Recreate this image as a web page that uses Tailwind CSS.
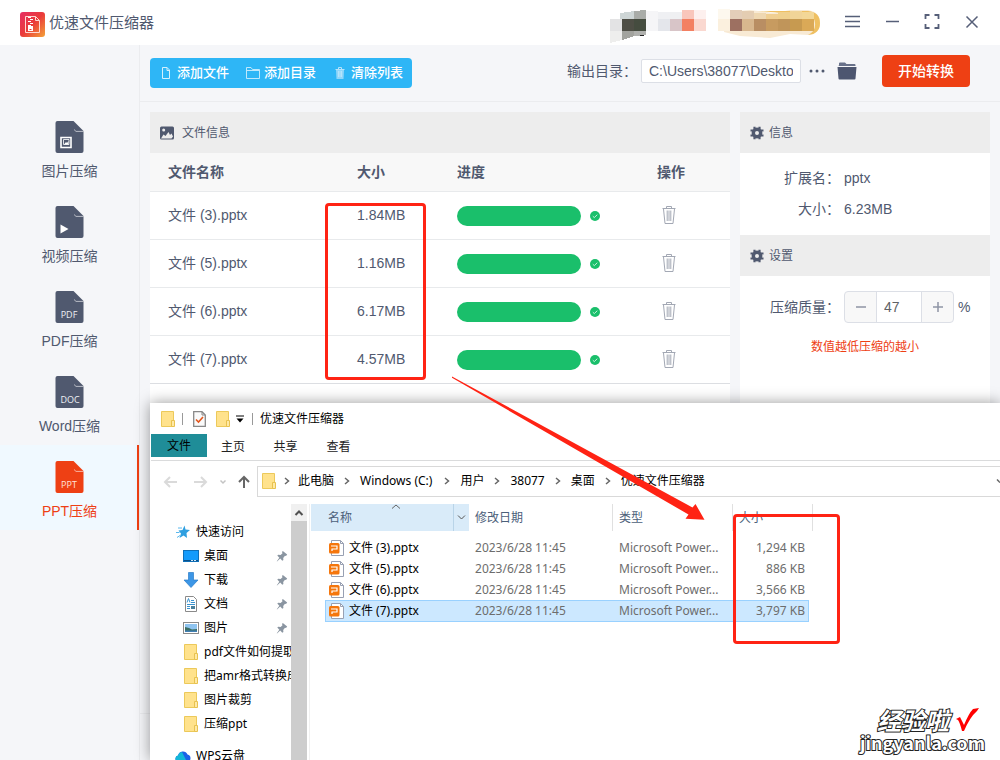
<!DOCTYPE html>
<html lang="zh-CN">
<head>
<meta charset="utf-8">
<meta name="viewport" content="width=device-width, initial-scale=1">
<title>优速文件压缩器</title>
<script src="https://cdn.jsdelivr.net/npm/@tailwindcss/browser@4"></script>
</head>
<body class="relative flex h-screen flex-col overflow-hidden bg-[#f5f6f9] font-['Liberation_Sans','Noto_Sans_CJK_SC',sans-serif] text-sm text-[#50596f]">

<svg class="hidden" aria-hidden="true">
  <symbol id="trash" viewBox="0 0 14 20"><path d="M.5 3.500H13.500M4.500 3V1.500H9.500V3M1.500 4L3 18.500H11L12.500 4M5.200 5.500V16M7 5.500V16M8.800 5.500V16" fill="none" stroke="currentColor" stroke-linejoin="round"/></symbol>
  <symbol id="ok" viewBox="0 0 10 10"><circle cx="5" cy="5" r="5" fill="#1abf6b"/><path d="M2.800 5.200L4.300 6.600L7.300 3.700" fill="none" stroke="#d6f5e5" stroke-width=".9"/></symbol>
  <symbol id="gear" viewBox="0 0 14 14"><circle cx="7" cy="7" r="3.700" fill="none" stroke="currentColor" stroke-width="3.400"/><path d="M4.500.8V3.500M9.500.8V3.500M4.500 10.500V13.200M9.500 10.500V13.200M.5 4.500H3M.5 9.500H3M11 4.500H13.500M11 9.500H13.500" stroke="currentColor" stroke-width="2.200"/></symbol>
  <symbol id="folder" viewBox="0 0 14 16"><path d="M.5.500H12.500V15.500H.5Z" fill="#ffe28c" stroke="#ecc95a"/><path d="M10.500 9.500H13.500V15.500H10.500Z" fill="#ffe9a6" stroke="#e8c24f"/></symbol>
  <symbol id="pin" viewBox="0 0 12 12"><path d="M6.800 1 11.200 4.600 10 6 9 5.800 7.200 8 7.400 10 6.300 10.800 4.200 8.600 1 11.500.8 11.200 3.300 7.800 1.300 5.600 2.200 4.700 4.600 4.900 6.500 3.200 6 1.900Z" fill="#8a95a1"/></symbol>
  <symbol id="chev" viewBox="0 0 6 8"><path d="M1 1 4.500 4 1 7" fill="none" stroke="#666" stroke-width="1.500"/></symbol>
  <symbol id="ppt" viewBox="0 0 16 16"><path d="M2.500.5H11.500L14.500 3.500V15.500H2.500Z" fill="#fff" stroke="#98a0b3"/><path d="M11.500.5V3.500H14.500" fill="none" stroke="#98a0b3"/><rect y="3" width="10.500" height="10.500" rx="1.500" fill="#f5760c"/><path d="M2 6H8V9H3V11" fill="none" stroke="#fff" stroke-width="1.200"/></symbol>
  <symbol id="doc" viewBox="0 0 30 32"><path d="M2.500 0H18.500L28.500 10V30Q28.500 32 26.500 32H2.500Q.5 32 .5 30V2Q.5 0 2.500 0Z" fill="currentColor"/><path d="M19 8.500 21 10.400H28.500" fill="none" stroke="#fff" stroke-opacity=".6"/></symbol>
</svg>

<header class="flex h-[45px] shrink-0 items-center bg-white pr-2 pl-5">
  <svg class="mt-1 size-[25px]" viewBox="0 0 25 25" aria-hidden="true">
    <defs><linearGradient id="lg" x1="0" y1="0" x2="1" y2="1"><stop offset="0" stop-color="#e62d63"/><stop offset=".5" stop-color="#ea3b3a"/><stop offset="1" stop-color="#f4a338"/></linearGradient></defs>
    <rect width="25" height="25" rx="3" fill="url(#lg)"/>
    <path d="M5.500 4.500H15.500L19.500 8.500V20.500H5.500ZM15.500 4.500V8.500H19.500" fill="none" stroke="#ffd9d4"/>
    <path d="M8 5.500H11M10 7.500H13M8 9.500H11M10 11.500H13M8 13.500H11" stroke="#fff"/><rect x="8" y="14" width="5" height="5" fill="#fff"/><path d="M9.500 17.500H11.500" stroke="#e33"/>
  </svg>
  <h1 class="ml-1 text-[15px]">优速文件压缩器</h1>
  <svg class="mr-2.5 ml-auto h-[45px] w-[212px]" viewBox="610 0 212 45" aria-hidden="true">
    <g shape-rendering="crispEdges">
      <path d="M620 13 634 11V19H620Z" fill="#ced6d6"/><path d="M634 11 646 10V19H634Z" fill="#a9aca8"/>
      <rect x="610" y="19" width="12" height="12" fill="#e3e3e4"/><rect x="622" y="19" width="12" height="12" fill="#4e4e45"/><rect x="634" y="19" width="12" height="12" fill="#454c3f"/>
      <path d="M610 31H622V40L610 43Z" fill="#eeeeed"/><path d="M622 31H634V36L622 40Z" fill="#a2a39e"/><path d="M634 31H646V35L634 36Z" fill="#b0b1ae"/><path d="M640 35H644V36H640Z" fill="#222"/>
      <rect x="646" y="11" width="12" height="20" fill="#f5f5f7"/><rect x="658" y="12" width="12" height="7" fill="#eff0f3"/><rect x="658" y="19" width="12" height="12" fill="#e4e6eb"/>
      <rect x="670" y="12" width="12" height="7" fill="#eff0f2"/><rect x="670" y="19" width="12" height="12" fill="#d8c5c8"/>
      <rect x="682" y="10" width="12" height="9" fill="#f9c6bb"/><rect x="682" y="19" width="12" height="12" fill="#f38062"/>
      <rect x="694" y="10" width="12" height="9" fill="#fdf0ee"/><rect x="694" y="19" width="12" height="12" fill="#fad8d0"/>
    </g>
    <path d="M726 12 750 10 775 13 790 10H808Q820 12 820 23T808 35L790 34 770 38 740 36 724 32Z" fill="#f8ead4"/>
    <path d="M758 11H808Q820 12 820 23T808 35Q816 31 815 23T806 15Z" fill="#efc062"/>
    <g shape-rendering="crispEdges">
      <rect x="718" y="9" width="12" height="10" fill="#fdf8ee"/><rect x="718" y="19" width="12" height="12" fill="#fbf0de"/>
      <rect x="730" y="10" width="12" height="9" fill="#e3ceb9"/><rect x="730" y="19" width="12" height="12" fill="#9d7061"/>
      <rect x="742" y="11" width="12" height="8" fill="#e4cdb2"/><rect x="742" y="19" width="12" height="12" fill="#d8b78e"/>
      <rect x="754" y="13" width="12" height="6" fill="#efd8b2"/><rect x="754" y="19" width="12" height="12" fill="#b98e63"/>
      <rect x="766" y="14" width="12" height="5" fill="#f0cf92"/><rect x="766" y="19" width="12" height="12" fill="#c79b60"/>
      <rect x="778" y="12" width="12" height="7" fill="#f0d08d"/><rect x="778" y="19" width="12" height="12" fill="#c0955a"/>
      <rect x="790" y="11" width="12" height="8" fill="#f1d498"/><rect x="790" y="19" width="12" height="12" fill="#c79a50"/>
      <rect x="802" y="12" width="12" height="7" fill="#f3d797"/><rect x="802" y="19" width="12" height="12" fill="#daa957"/>
    </g>
  </svg>
  <div class="flex pb-1 text-[#565f78]">
    <button class="flex h-8 w-10 items-center justify-center" aria-label="菜单"><svg class="size-4" viewBox="0 0 16 16"><path d="M1 3.500H16M1 8.500H16M1 13.500H16" stroke="currentColor" stroke-width="1.500"/></svg></button>
    <button class="flex h-8 w-10 items-center justify-center" aria-label="最小化"><svg class="size-4" viewBox="0 0 16 16"><path d="M2 8.500H15" stroke="currentColor" stroke-width="1.500"/></svg></button>
    <button class="flex h-8 w-10 items-center justify-center" aria-label="最大化"><svg class="size-4" viewBox="0 0 16 16"><path d="M1.500 6V2H5.500M10.500 2H14.500V6M14.500 11V15H10.500M5.500 15H1.500V11" fill="none" stroke="currentColor" stroke-width="1.800"/></svg></button>
    <button class="flex h-8 w-10 items-center justify-center" aria-label="关闭"><svg class="size-4" viewBox="0 0 16 16"><path d="M2.500 3.500 13.500 14.500M13.500 3.500 2.500 14.500" stroke="currentColor" stroke-width="1.500"/></svg></button>
  </div>
</header>

<div class="flex min-h-0 flex-1">
  <nav class="w-[140px] shrink-0 border-r border-[#ebecef] pt-[60px]">
    <a href="#" class="flex h-[85px] flex-col items-center gap-2 pt-4">
      <svg class="h-8 w-[30px]" viewBox="0 0 30 32"><use href="#doc"/><path d="M6 16.500H16V26.500H6Z" fill="none" stroke="#fff" stroke-width="1.600"/><path d="M8.500 18.500H14V23.500H8.500Z" fill="none" stroke="#fff" stroke-width=".8"/><path d="M9 23.500 11 21 12 22 13.500 20V23.500Z" fill="#fff"/></svg>
      <span>图片压缩</span></a>
    <a href="#" class="flex h-[85px] flex-col items-center gap-2 pt-4">
      <svg class="h-8 w-[30px]" viewBox="0 0 30 32"><use href="#doc"/><path d="M5.500 18.500 13.500 23 5.500 27.500Z" fill="#fff"/></svg>
      <span>视频压缩</span></a>
    <a href="#" class="flex h-[85px] flex-col items-center gap-2 pt-4">
      <svg class="h-8 w-[30px]" viewBox="0 0 30 32"><use href="#doc"/><text x="14" y="27" font-size="9" text-anchor="middle" fill="#eef0f4" class="font-['Open_Sans']">PDF</text></svg>
      <span>PDF压缩</span></a>
    <a href="#" class="flex h-[85px] flex-col items-center gap-2 pt-4">
      <svg class="h-8 w-[30px]" viewBox="0 0 30 32"><use href="#doc"/><text x="15" y="27" font-size="9" text-anchor="middle" fill="#eef0f4" class="font-['Open_Sans']">DOC</text></svg>
      <span>Word压缩</span></a>
    <a href="#" aria-current="page" class="flex h-[85px] flex-col items-center gap-2 bg-[#f0f9ff] pt-4 text-[#ee4014] shadow-[inset_-2px_0_0_#ee4014]">
      <svg class="h-8 w-[30px]" viewBox="0 0 30 32"><use href="#doc"/><text x="14" y="27" font-size="9" text-anchor="middle" fill="#ffe3da" class="font-['Open_Sans']">PPT</text></svg>
      <span>PPT压缩</span></a>
  </nav>

  <main class="flex min-w-0 flex-1 flex-col">
    <div class="flex h-[57px] shrink-0 items-center border-b border-[#ebecef] pr-[30px] pl-2.5">
      <div class="flex h-[30px] rounded bg-[#2eb6f6] text-[13px] font-medium text-white">
        <button class="flex items-center gap-[3px] px-2"><svg class="size-4" viewBox="0 0 16 16"><path d="M4.500 2.500H9L11.500 5V13.500H4.500ZM9 2.500V5.500H11.500" fill="none" stroke="#d5f0fd"/></svg>添加文件</button>
        <button class="flex items-center gap-[3px] px-2"><svg class="size-4" viewBox="0 0 16 16"><path d="M1.500 2.500H6L7.500 4.500H14.500V13.500H1.500ZM1.500 5.500H14" fill="none" stroke="#bfe8fc"/></svg>添加目录</button>
        <button class="flex items-center gap-[3px] pr-[9px] pl-2"><svg class="size-4" viewBox="0 0 16 16"><path d="M4 5H12L11.500 14H4.500Z" fill="#8fd6fa"/><path d="M3.500 4.500H12.500M6.500 4V2.500H9.500V4M6.500 6V12M8 6V12M9.500 6V12" fill="none" stroke="#b5e3fb"/></svg>清除列表</button>
      </div>
      <div class="ml-auto flex items-center pb-1">
        <label for="out" class="mr-1">输出目录：</label>
        <input id="out" value="C:\Users\38077\Desktop" class="h-6 w-40 rounded-xs border border-[#dcdfe6] bg-white px-[7px] text-sm">
        <button class="ml-2 flex h-6 w-4 items-center" aria-label="浏览"><svg class="h-1 w-4" viewBox="0 0 16 4"><g fill="currentColor"><circle cx="2" cy="2" r="1.500"/><circle cx="8" cy="2" r="1.500"/><circle cx="14" cy="2" r="1.500"/></g></svg></button>
        <button class="ml-3 flex h-6 w-5 items-center" aria-label="打开目录"><svg class="h-[18px] w-5" viewBox="0 0 20 18"><path d="M2 3V1.500Q2 .5 3 .5H8L9.500 2H17.500Q18.500 2 18.500 3V4H1.500Z" fill="#68718a"/><path d="M.5 5H19.500L18.500 16.500Q18.500 17.500 17.500 17.500H2.500Q1.500 17.500 1.500 16.500Z" fill="#4d5670"/></svg></button>
        <button class="ml-[25px] h-8 w-[88px] rounded bg-[#ee4014] text-sm font-medium text-white">开始转换</button>
      </div>
    </div>

    <div class="flex min-h-0 flex-1 gap-2.5 p-2.5">
      <section class="min-w-0 flex-1 bg-white">
        <h2 class="flex h-[41px] items-center gap-2 bg-[#ededed] px-2.5 text-xs"><svg class="size-[14px]" viewBox="0 0 14 14"><rect y=".5" width="14" height="13" rx="1.500" fill="currentColor"/><circle cx="3.700" cy="4" r="1.500" fill="#ededed"/><path d="M1 12.500 3.500 8.500 5.500 10 8.500 6 10 9 11.500 7.500 13 10.500 11.500 12.500Z" fill="#ededed"/></svg>文件信息</h2>
        <table class="w-full table-fixed border-separate border-spacing-0 text-left">
          <colgroup><col><col class="w-[100px]"><col class="w-[200px]"><col class="w-[91px]"></colgroup>
          <thead><tr class="h-[39px] bg-[#f8f8f8] *:border-b *:border-[#e8eaec] *:px-[18px] *:font-bold"><th>文件名称</th><th>大小</th><th>进度</th><th>操作</th></tr></thead>
          <tbody>
            <tr class="h-12 *:border-b *:border-[#e8eaec] *:px-[18px] *:pb-0.5"><td>文件 (3).pptx</td><td>1.84MB</td><td><div class="flex items-center gap-[9px] pt-0.5"><div class="h-5 w-[124px] rounded-full bg-[#1abf6b]"></div><svg class="size-2.5"><use href="#ok"/></svg></div></td><td><button aria-label="删除" class="ml-1 block text-[#a3a8b4]"><svg class="h-5 w-4"><use href="#trash"/></svg></button></td></tr>
            <tr class="h-12 *:border-b *:border-[#e8eaec] *:px-[18px] *:pb-0.5"><td>文件 (5).pptx</td><td>1.16MB</td><td><div class="flex items-center gap-[9px] pt-0.5"><div class="h-5 w-[124px] rounded-full bg-[#1abf6b]"></div><svg class="size-2.5"><use href="#ok"/></svg></div></td><td><button aria-label="删除" class="ml-1 block text-[#a3a8b4]"><svg class="h-5 w-4"><use href="#trash"/></svg></button></td></tr>
            <tr class="h-12 *:border-b *:border-[#e8eaec] *:px-[18px] *:pb-0.5"><td>文件 (6).pptx</td><td>6.17MB</td><td><div class="flex items-center gap-[9px] pt-0.5"><div class="h-5 w-[124px] rounded-full bg-[#1abf6b]"></div><svg class="size-2.5"><use href="#ok"/></svg></div></td><td><button aria-label="删除" class="ml-1 block text-[#a3a8b4]"><svg class="h-5 w-4"><use href="#trash"/></svg></button></td></tr>
            <tr class="h-12 *:border-b *:border-[#dcdee2] *:px-[18px] *:pb-0.5"><td>文件 (7).pptx</td><td>4.57MB</td><td><div class="flex items-center gap-[9px] pt-0.5"><div class="h-5 w-[124px] rounded-full bg-[#1abf6b]"></div><svg class="size-2.5"><use href="#ok"/></svg></div></td><td><button aria-label="删除" class="ml-1 block text-[#a3a8b4]"><svg class="h-5 w-4"><use href="#trash"/></svg></button></td></tr>
          </tbody>
        </table>
      </section>

      <aside class="w-[250px] shrink-0 bg-white">
        <h2 class="flex h-[41px] items-center gap-[5px] bg-[#ededed] px-2.5 text-xs"><svg class="size-[14px]"><use href="#gear"/></svg>信息</h2>
        <dl class="grid grid-cols-[100px_1fr] gap-x-1 py-2.5 leading-[31px]">
          <dt class="text-right">扩展名：</dt><dd>pptx</dd>
          <dt class="text-right">大小：</dt><dd>6.23MB</dd>
        </dl>
        <h2 class="flex h-[41px] items-center gap-[5px] bg-[#ededed] px-2.5 text-xs"><svg class="size-[14px]"><use href="#gear"/></svg>设置</h2>
        <div class="flex items-center pt-[15px]">
          <label for="q" class="w-[100px] text-right">压缩质量：</label>
          <div class="ml-1 flex h-8 w-[110px] overflow-hidden rounded border border-[#dcdfe6] bg-[#f8f8f8]">
            <button aria-label="减少" class="flex w-[31px] items-center justify-center"><svg class="size-2.5" viewBox="0 0 10 10"><path d="M0 5H10" stroke="#8f95a5" stroke-width="1.500"/></svg></button>
            <input id="q" value="47" inputmode="numeric" class="w-[46px] border-x border-[#dcdfe6] bg-white px-[7px] text-sm text-[#606266]">
            <button aria-label="增加" class="flex w-[31px] items-center justify-center"><svg class="size-2.5" viewBox="0 0 10 10"><path d="M0 5H10M5 0V10" stroke="#8f95a5" stroke-width="1.500"/></svg></button>
          </div>
          <span class="ml-1">%</span>
        </div>
        <p class="mt-4 text-center text-xs text-[#ee4014]">数值越低压缩的越小</p>
      </aside>
    </div>
    <div class="h-[47px] shrink-0 border-t border-[#ebecef]"></div>
  </main>
</div>

<!-- Explorer window floating over the app -->
<section class="absolute top-[403px] right-0 bottom-0 left-[150px] flex flex-col overflow-hidden bg-white pl-px font-['Noto_Sans','Noto_Sans_CJK_SC',sans-serif] text-xs text-black shadow-[0_0_14px_rgba(0,0,0,0.4)]">
  <div class="flex h-[31px] shrink-0 items-center pl-2.5">
    <svg class="h-4 w-[14px]"><use href="#folder"/></svg>
    <span class="mx-[7px] h-3 w-px bg-[#999]"></span>
    <svg class="ml-[3px] h-4 w-[13px]" viewBox="0 0 13 16"><path d="M.7.7H9L12.300 4V15.300H.7Z" fill="#fafafa" stroke="#888" stroke-width="1.300"/><path d="M9 1V4H12" fill="none" stroke="#888"/><path d="M3 8.500 5.500 11 10 6" fill="none" stroke="#e2551c" stroke-width="1.600"/></svg>
    <svg class="ml-2.5 h-4 w-[14px]"><use href="#folder"/></svg>
    <svg class="ml-1.5 h-2 w-2" viewBox="0 0 8 8"><path d="M0 1H8" stroke="#000"/><path d="M.5 3.500H7.500L4 7.500Z"/></svg>
    <span class="mr-[7px] ml-2 h-3 w-px bg-[#999]"></span>
    <span>优速文件压缩器</span>
  </div>
  <div class="flex h-[27px] shrink-0 border-b border-[#dadbdc] pb-[3px] text-[#222]" role="tablist">
    <button role="tab" class="w-14 bg-[#1f8d98] text-black">文件</button>
    <button role="tab" class="w-[52px] pt-0.5">主页</button>
    <button role="tab" class="w-[53px] pt-0.5">共享</button>
    <button role="tab" class="w-[53px] pt-0.5">查看</button>
  </div>
  <div class="flex h-[43px] shrink-0 items-center pb-[3px] pl-3">
    <svg class="h-4 w-[90px] shrink-0" viewBox="0 0 90 16"><path d="M7 4 2 9 7 14M2 9H14M38 4 43 9 38 14M43 9H31" fill="none" stroke="#dadada" stroke-width="2"/><path d="M57.500 7.500 60 10 62.500 7.500" fill="none" stroke="#c4c4c4" stroke-width="1.500"/><path d="M76 9 81 4 86 9M81 4V15" fill="none" stroke="#666" stroke-width="2"/></svg>
    <div class="ml-1 flex h-[31px] min-w-0 flex-1 items-center border border-r-0 border-[#d9d9d9] pl-1">
      <svg class="h-4 w-[14px] shrink-0"><use href="#folder"/></svg>
      <svg class="mr-2 ml-2 h-2 w-1.5"><use href="#chev"/></svg><span>此电脑</span>
      <svg class="mx-2.5 h-2 w-1.5"><use href="#chev"/></svg><span>Windows (C:)</span>
      <svg class="mr-2.5 ml-3 h-2 w-1.5"><use href="#chev"/></svg><span>用户</span>
      <svg class="mx-2.5 h-2 w-1.5"><use href="#chev"/></svg><span>38077</span>
      <svg class="mx-2.5 h-2 w-1.5"><use href="#chev"/></svg><span>桌面</span>
      <svg class="mr-2.5 ml-2.5 h-2 w-1.5"><use href="#chev"/></svg><span>优速文件压缩器</span>
      <svg class="ml-auto h-2 w-1" viewBox="0 0 4 8"><path d="M1 2.500 4 5.500" stroke="#666" stroke-width="1.500"/></svg>
    </div>
  </div>
  <div class="flex min-h-0 flex-1">
    <ul class="w-[140px] shrink-0 overflow-hidden pt-4 whitespace-nowrap *:flex *:h-6 *:items-center *:gap-[5px] *:pl-8">
      <li class="-ml-2"><svg class="h-4 w-4 shrink-0" viewBox="0 0 16 16"><path d="M9.500 1.500 10.500 5.500 15 6 11.500 9 12 14 8.500 11.500 4.500 14 6 9.500 3.500 6.500 7.500 6Z" fill="#2f9fe0"/><path d="M3 4H7M1 8.500H4.500M2 13.500 5 11.500" stroke="#58b8ee"/></svg>快速访问</li>
      <li><svg class="h-4 w-4 shrink-0" viewBox="0 0 16 16"><rect x=".5" y="2.500" width="15" height="11" fill="#149bfb" stroke="#0e6fb8"/><path d="M1 12.500H15" stroke="#0b4f86"/><path d="M8 12.500H14" stroke="#cfe8fa" stroke-dasharray="2 1"/></svg>桌面<svg class="mr-[3px] ml-auto size-3"><use href="#pin"/></svg></li>
      <li><svg class="h-4 w-4 shrink-0" viewBox="0 0 16 16"><path d="M5.500.5H10.500V8H15L8 15.500 1 8H5.500Z" fill="#3c96e6" stroke="#2a7cc9" stroke-width=".7"/></svg>下载<svg class="mr-[3px] ml-auto size-3"><use href="#pin"/></svg></li>
      <li><svg class="h-4 w-4 shrink-0" viewBox="0 0 16 16"><path d="M2.500.5H10.500L13.500 3.500V15.500H2.500Z" fill="#fff" stroke="#8a8a8a"/><path d="M4 6.500 5.500 2.500 7 6.500M8 4.500H11M8 6.500H12M4 8.500H12M4 10.500H7M4 12.500H7" stroke="#3b93cf" fill="none"/><rect x="8" y="10" width="4" height="3" fill="#4a7f9b"/></svg>文档<svg class="mr-[3px] ml-auto size-3"><use href="#pin"/></svg></li>
      <li><svg class="h-4 w-4 shrink-0" viewBox="0 0 16 16"><rect x=".5" y="2.500" width="15" height="11" fill="#fff" stroke="#8a8a8a"/><rect x="2" y="4" width="12" height="8" fill="#8fc4f0"/><path d="M2 7 6 8 9 9.500 14 9V12H2Z" fill="#3c6e63"/><path d="M2 10.500H14V12H2Z" fill="#417fb5"/></svg>图片<svg class="mr-[3px] ml-auto size-3"><use href="#pin"/></svg></li>
      <li><svg class="mx-px h-4 w-[14px] shrink-0"><use href="#folder"/></svg>pdf文件如何提取</li>
      <li><svg class="mx-px h-4 w-[14px] shrink-0"><use href="#folder"/></svg>把amr格式转换成</li>
      <li><svg class="mx-px h-4 w-[14px] shrink-0"><use href="#folder"/></svg>图片裁剪</li>
      <li><svg class="mx-px h-4 w-[14px] shrink-0"><use href="#folder"/></svg>压缩ppt</li>
      <li class="mt-2 -ml-2"><svg class="h-4 w-4 shrink-0" viewBox="0 0 16 16"><path d="M3.500 14A3.300 3.300 0 0 1 3 7.500 5 5 0 0 1 12.500 6.500 3.800 3.800 0 0 1 12 14Z" fill="#1b62e8"/><path d="M3.500 14A3.300 3.300 0 0 1 3 7.500 5 5 0 0 1 7 4L12 14Z" fill="#13b7d8"/></svg>WPS云盘</li>
    </ul>
    <div class="w-4 shrink-0 bg-[#cdcdcd]"><div class="flex h-[17px] items-center justify-center bg-[#f0f0f0]"><svg class="h-2 w-2.5" viewBox="0 0 10 8"><path d="M1.500 6 5 2.500 8.500 6" fill="none" stroke="#505050" stroke-width="2"/></svg></div></div>
    <div class="ml-0.5 min-w-0 flex-1 overflow-hidden border-l border-[#f0f0f0] pl-px">
      <table class="w-[502px] table-fixed border-separate border-spacing-0 text-left text-[#6d6d6d]">
        <colgroup><col class="w-[14px]"><col class="w-[144px]"><col class="w-[144px]"><col class="w-[120px]"><col class="w-[76px]"><col class="w-1"></colgroup>
        <thead><tr class="h-[27px] text-[#4c607a] *:font-normal">
          <th colspan="2" class="relative bg-[#d9ebf9] pl-[17px]">名称<svg class="absolute top-0 left-20 h-[5px] w-2.5" viewBox="0 0 10 5"><path d="M1 4.500 5 1 9 4.500" fill="none" stroke="#666"/></svg><span class="absolute inset-y-0 right-0 flex w-4 items-center justify-center border-l border-[#b9d4e8]"><svg class="h-2 w-2.5" viewBox="0 0 10 8"><path d="M1 1.500 4.500 5 8 1.500" fill="none" stroke="#555"/></svg></span></th>
          <th class="border-r border-[#e0e0e0] pl-1.5">修改日期</th><th class="border-r border-[#e0e0e0] pl-1.5">类型</th><th colspan="2" class="border-r border-[#e0e0e0] pl-1.5">大小</th></tr></thead>
        <tbody>
          <tr aria-hidden="true" class="h-1.5"><td colspan="6"></td></tr>
          <tr class="h-[21px] *:whitespace-nowrap"><td></td><td class="text-black"><div class="flex items-center gap-1 pl-1"><svg class="size-4"><use href="#ppt"/></svg>文件 (3).pptx</div></td><td class="pl-1.5">2023/6/28 11:45</td><td class="pl-1.5">Microsoft Power...</td><td class="pr-1 text-right">1,294 KB</td><td></td></tr>
          <tr class="h-[21px] *:whitespace-nowrap"><td></td><td class="text-black"><div class="flex items-center gap-1 pl-1"><svg class="size-4"><use href="#ppt"/></svg>文件 (5).pptx</div></td><td class="pl-1.5">2023/6/28 11:45</td><td class="pl-1.5">Microsoft Power...</td><td class="pr-1 text-right">886 KB</td><td></td></tr>
          <tr class="h-[21px] *:whitespace-nowrap"><td></td><td class="text-black"><div class="flex items-center gap-1 pl-1"><svg class="size-4"><use href="#ppt"/></svg>文件 (6).pptx</div></td><td class="pl-1.5">2023/6/28 11:45</td><td class="pl-1.5">Microsoft Power...</td><td class="pr-1 text-right">3,566 KB</td><td></td></tr>
          <tr class="h-[22px] *:whitespace-nowrap" aria-selected="true"><td></td><td class="border-y border-l border-[#99d1ff] bg-[#cce8ff] text-black"><div class="flex items-center gap-1 pl-[3px]"><svg class="size-4"><use href="#ppt"/></svg>文件 (7).pptx</div></td><td class="border-y border-[#99d1ff] bg-[#cce8ff] pl-1.5">2023/6/28 11:45</td><td class="border-y border-[#99d1ff] bg-[#cce8ff] pl-1.5">Microsoft Power...</td><td class="border-y border-r border-[#99d1ff] bg-[#cce8ff] pr-[3px] text-right">3,797 KB</td><td></td></tr>
        </tbody>
      </table>
    </div>
  </div>
</section>

<!-- Red annotations -->
<div class="absolute top-[203px] left-[325px] h-[177px] w-[101px] rounded-sm border-3 border-[#ff2314]"></div>
<div class="absolute top-[514px] left-[733px] h-[130px] w-[107px] rounded-sm border-3 border-[#ff2314]"></div>
<svg class="absolute top-[370px] left-[445px] h-[160px] w-[270px]" viewBox="445 370 270 160" aria-hidden="true"><path d="M452 376.500 692.500 507.500 695.500 504 704.500 519.700 685.500 518.700 688.500 514.500 452 377.800Z" fill="#ff2314"/></svg>

<!-- Watermark -->
<div class="absolute right-[15px] bottom-2 flex flex-col items-end font-['Noto_Sans_CJK_SC',sans-serif] font-bold text-white [-webkit-text-stroke:2px_#222] [paint-order:stroke_fill]">
  <div class="flex items-center pr-1.5"><span class="text-2xl leading-6 italic">经验啦</span><svg class="ml-1.5 h-6 w-6" viewBox="0 0 24 24" aria-hidden="true"><path d="M1 11 5 9 9 17Q14 5 18 1L24 0 22 3Q15 9 9 23H7Q5 15 3 12Z" fill="#f00" stroke="none"/></svg></div>
  <span class="text-lg leading-5">jingyanla.com</span>
</div>
</body>
</html>
